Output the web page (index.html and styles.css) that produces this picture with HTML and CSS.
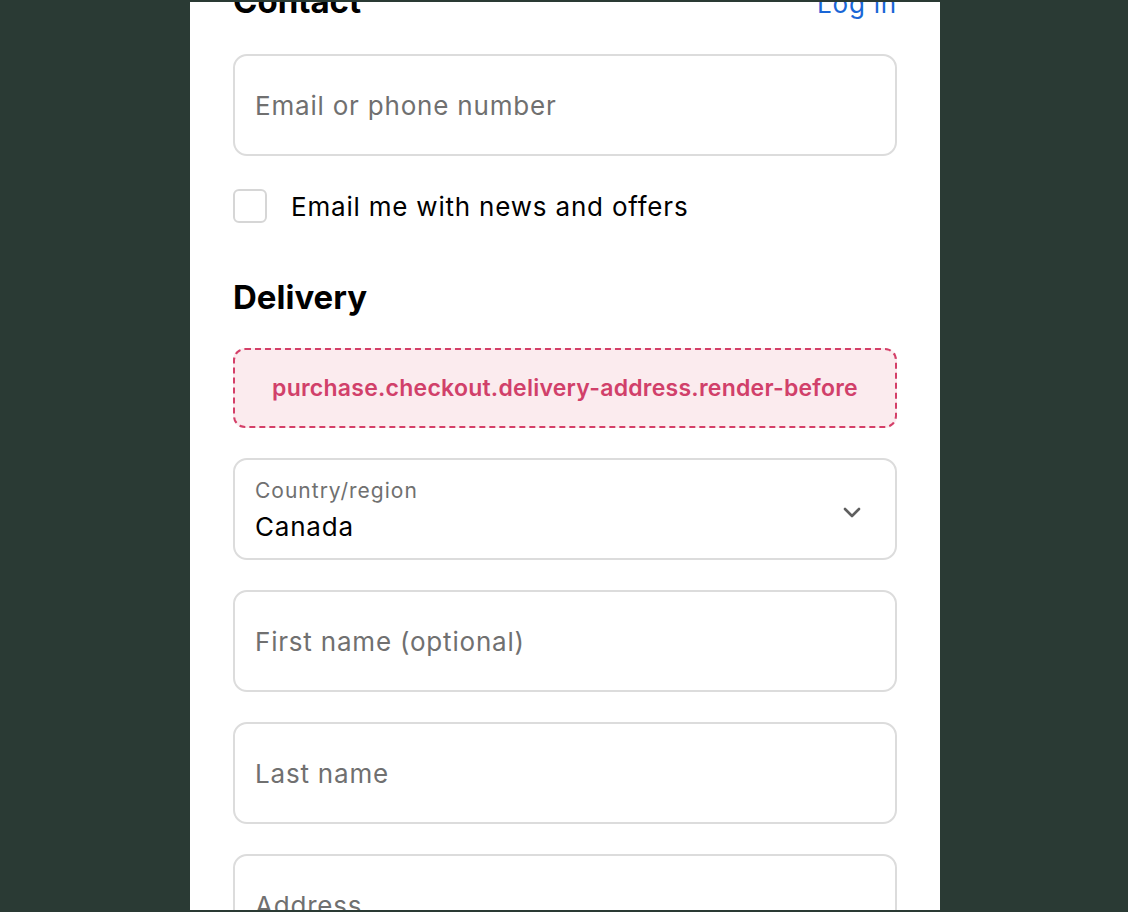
FILE: index.html
```html
<!DOCTYPE html>
<html lang="en">
<head>
    <meta charset="UTF-8">
    <meta name="viewport" content="width=device-width, initial-scale=1.0">
    <title>Checkout</title>

    <link rel="stylesheet" href="styles.css">
</head>
<body>
    <div class="page">
        <div class="checkout">
            <!-- Contact section -->
            <div class="section-head">
                <h2>Contact</h2>
                <a href="#" class="login">Log in</a>
            </div>
            <div class="field">
                <span class="placeholder">Email or phone number</span>
            </div>
            <label class="check">
                <span class="box"></span>
                <span>Email me with news and offers</span>
            </label>

            <!-- Delivery section -->
            <h2 class="delivery-title">Delivery</h2>
            <div class="extension">purchase.checkout.delivery-address.render-before</div>

            <div class="field select">
                <div>
                    <div class="small-label">Country/region</div>
                    <div class="value">Canada</div>
                </div>
                <svg class="chevron" width="18" height="12" viewBox="0 0 18 12">
                    <path d="M2 2 L9 9 L16 2" fill="none" stroke="#5f5f5f" stroke-width="2.6" stroke-linecap="round" stroke-linejoin="round"/>
                </svg>
            </div>
            <div class="field">
                <span class="placeholder">First name (optional)</span>
            </div>
            <div class="field">
                <span class="placeholder">Last name</span>
            </div>
            <div class="field">
                <span class="placeholder">Address</span>
            </div>
        </div>
    </div>
</body>
</html>
```

FILE: styles.css
```css
/* Checkout page styles */
body {
    margin: 0;
    padding: 0;
    background-color: #2a3a34;
    font-family: 'Inter', 'Liberation Sans', sans-serif;
    height: 912px;
    overflow: hidden;
}

.page {
    margin: 2px 0 0 190px;
    width: 750px;
    height: 908px;
    background-color: #fff;
    overflow: hidden;
}

.checkout {
    padding: 0 43px;
    margin-top: -21px;
}

.section-head {
    display: flex;
    justify-content: space-between;
    align-items: baseline;
    height: 40px;
}

h2 {
    margin: 0;
    font-size: 33px;
    font-weight: 700;
    line-height: 40px;
    color: #000;
}

.login {
    color: #1a66d6;
    font-size: 26px;
    letter-spacing: 0.8px;
    text-decoration: none;
}

.field {
    box-sizing: border-box;
    height: 102px;
    border: 2px solid #dcdcdc;
    border-radius: 14px;
    margin-top: 30px;
    padding: 0 20px;
    display: flex;
    align-items: center;
    font-size: 26px;
    letter-spacing: 0.8px;
}

.section-head + .field {
    margin-top: 33px;
}

.placeholder {
    color: #707070;
}

.check {
    display: flex;
    align-items: center;
    margin-top: 33px;
    font-size: 26px;
    letter-spacing: 0.8px;
    color: #000;
}

.box {
    box-sizing: border-box;
    width: 34px;
    height: 34px;
    border: 2px solid #d6d6d6;
    border-radius: 6px;
    margin-right: 24px;
}

.delivery-title {
    margin-top: 54px;
}

.extension {
    box-sizing: border-box;
    height: 80px;
    margin-top: 31px;
    border: 2px dashed #d43f68;
    border-radius: 12px;
    background-color: #fbebee;
    color: #d1406a;
    font-size: 23px;
    letter-spacing: 0.25px;
    font-weight: 600;
    display: flex;
    align-items: center;
    justify-content: center;
}

.select {
    justify-content: space-between;
}

.small-label {
    font-size: 21px;
    letter-spacing: 1px;
    color: #707070;
    line-height: 30px;
}

.value {
    font-size: 26px;
    color: #000;
    line-height: 30px;
    margin-top: 6px;
}

.chevron {
    margin-right: 14px;
    margin-top: 8px;
}
```
